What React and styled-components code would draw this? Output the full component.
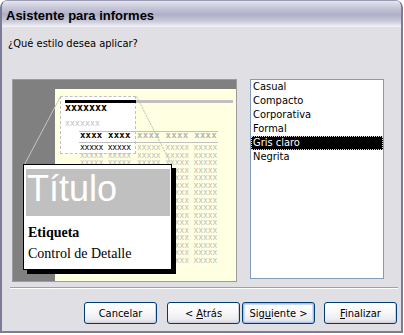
import React from "react";
import styled, { createGlobalStyle } from "styled-components";

const GlobalStyle = createGlobalStyle`
  html, body { margin: 0; padding: 0; background: #ffffff; }
  body {
    font-family: "DejaVu Sans Condensed", "DejaVu Sans", sans-serif;
    font-size: 11px;
    color: #000;
  }
`;

const Window = styled.div`
  width: 403px;
  height: 333px;
  box-sizing: border-box;
  border: 2px solid #7c7c98;
  border-top: none;
  border-radius: 8px 8px 0 0;
  background: #e0dfe3;
  display: flex;
  flex-direction: column;
  overflow: hidden;
`;

const TitleBar = styled.div`
  height: 27px;
  box-sizing: border-box;
  padding: 7px 0 0 4px;
  border-top: 1px solid #9a9ab2;
  background: linear-gradient(
    to bottom,
    #e6e6ef 0%,
    #cbcbdc 22%,
    #afafc8 52%,
    #c9c9da 78%,
    #f4f4f8 100%
  );
  font: bold 13px/15px "Liberation Sans", Arial, sans-serif;
  color: #000;
`;

const Body = styled.div`
  flex: 1;
  display: flex;
  flex-direction: column;
`;

const Question = styled.div`
  margin: 10px 0 0 6px;
  line-height: 13px;
`;

const MainRow = styled.div`
  display: flex;
  align-items: flex-start;
  gap: 13px;
  margin: 29px 0 0 10px;
`;

const Preview = styled.div`
  position: relative;
  box-sizing: border-box;
  width: 225px;
  height: 203px;
  border: 1px solid #9c9c9c;
  background: #808080;
  padding: 9px 0 0 42px;
  display: flex;
`;

const Page = styled.div`
  position: relative;
  flex: 1;
  background: #ffffe1;
`;

const Highlight = styled.div`
  position: absolute;
  left: 5px;
  top: 7px;
  width: 76px;
  height: 58px;
  box-sizing: border-box;
  border: 1px dashed #c0c0c0;
  background: #ffffff;
`;

const PageContent = styled.div`
  position: relative;
  padding-top: 11px;
`;

const HeaderBar = styled.div`
  display: flex;
  margin-left: 10px;
  height: 3px;
`;

const BarPart = styled.div`
  width: ${(p) => p.$w}px;
  background: ${(p) => p.$color};
`;

const Marks = styled.div`
  font-family: "DejaVu Sans Mono", monospace;
  font-size: ${(p) => p.$size}px;
  line-height: ${(p) => p.$lh}px;
  font-weight: ${(p) => (p.$bold ? "bold" : "normal")};
  letter-spacing: ${(p) => p.$ls || 0}px;
  color: ${(p) => p.$color};
  margin: ${(p) => p.$margin || "0"};
  white-space: pre;
`;

const Table = styled.div`
  margin: 3px 0 0 24px;
  width: 139px;
  border-top: 1px solid #c0c0c0;
`;

const HeadRow = styled.div`
  display: flex;
  height: 10px;
  border-bottom: 1px solid #c0c0c0;
`;

const Rows = styled.div`
  padding-top: 1px;
`;

const Row = styled.div`
  display: flex;
  height: 7.5px;
`;

const Cell = styled.div`
  width: ${(p) => p.$w}px;
  padding-left: ${(p) => p.$pl || 0}px;
  box-sizing: border-box;
`;

const Lines = styled.svg`
  position: absolute;
  left: 0;
  top: 0;
  z-index: 1;
  pointer-events: none;
`;

const Popup = styled.div`
  position: absolute;
  left: 10px;
  top: 84px;
  width: 149px;
  height: 106px;
  box-sizing: border-box;
  border: 1px solid #000;
  background: #fff;
  box-shadow: 4px 4px 0 #000;
  z-index: 2;
`;

const TitleBlock = styled.div`
  margin: 4px 1px 0 2px;
  height: 47px;
  box-sizing: border-box;
  padding: 2px 0 0 1px;
  background: #c0c0c0;
  color: #fff;
  font: 36px/36px "Liberation Sans", Arial, sans-serif;
`;

const Labels = styled.div`
  margin-top: 6px;
  padding-left: 4px;
  font-family: "Liberation Serif", "Times New Roman", serif;
  font-size: 14px;
  line-height: 21px;
`;

const Label = styled.div`
  font-weight: ${(p) => (p.$bold ? "bold" : "normal")};
`;

const ListBox = styled.div`
  box-sizing: border-box;
  width: 134px;
  height: 200px;
  border: 1px solid #7f9db9;
  background: #fff;
`;

const ListItem = styled.div`
  height: 14px;
  line-height: 14px;
  padding-left: 2px;
  background: ${(p) => (p.$selected ? "#000" : "transparent")};
  color: ${(p) => (p.$selected ? "#fff" : "#000")};
  outline: ${(p) => (p.$selected ? "1px dotted #d8d8d8" : "none")};
  outline-offset: -1px;
`;

const Separator = styled.div`
  margin: 5px 3px 0 8px;
  border-top: 1px solid #a0a0a4;
  border-bottom: 1px solid #ffffff;
`;

const ButtonRow = styled.div`
  display: flex;
  justify-content: flex-end;
  margin-top: 13px;
  padding-right: 4px;
`;

const Button = styled.button`
  width: 73px;
  height: 22px;
  box-sizing: border-box;
  margin: 0 0 0 ${(p) => p.$gap || 0}px;
  padding: 0;
  border: 1px solid #003c74;
  border-radius: 3px;
  background: linear-gradient(
    to bottom,
    #ffffff 0%,
    #f8f8fa 45%,
    #ededf1 80%,
    #d6d6de 100%
  );
  box-shadow: ${(p) =>
    p.$default
      ? "inset 0 0 0 1px #a6c0ee, inset 0 0 0 2px #cfdcf5"
      : "inset -1px -1px 0 #d2d2da"};
  font-family: "DejaVu Sans Condensed", "DejaVu Sans", sans-serif;
  font-size: 11px;
  line-height: 13px;
  color: #000;
  u { text-decoration: underline; }
`;

const styles = ["Casual", "Compacto", "Corporativa", "Formal", "Gris claro", "Negrita"];
const rowCount = 16;
const visibleLeftRows = 3;

export default function App() {
  return (
    <>
      <GlobalStyle />
      <Window>
        <TitleBar>Asistente para informes</TitleBar>
        <Body>
          <Question>¿Qué estilo desea aplicar?</Question>
          <MainRow>
            <Preview>
              <Page>
                <Highlight />
                <PageContent>
                  <HeaderBar>
                    <BarPart $w={71} $color="#000" />
                    <BarPart $w={97} $color="#c0c0c0" />
                  </HeaderBar>
                  <Marks $size={10} $lh={10} $bold $color="#000" $margin="0 0 0 10px">
                    xxxxxxx
                  </Marks>
                  <Marks $size={8} $lh={8} $ls={0.2} $color="#c0c0c0" $margin="7px 0 0 10px">
                    xxxxxxx
                  </Marks>
                  <Table>
                    <HeadRow>
                      <Cell $w={58} $pl={1}>
                        <Marks $size={9} $lh={6} $bold $ls={0.2} $color="#000">
                          xxxx xxxx
                        </Marks>
                      </Cell>
                      <Cell $w={81}>
                        <Marks $size={9} $lh={6} $bold $ls={0.3} $color="#b4b4b4">
                          xxxx xxxx xxxx
                        </Marks>
                      </Cell>
                    </HeadRow>
                    <Rows>
                      {Array.from({ length: rowCount }).map((_, i) => (
                        <Row key={i}>
                          <Cell $w={58} $pl={1}>
                            {i < visibleLeftRows && (
                              <Marks
                                $size={8}
                                $lh={7.5}
                                $ls={-0.2}
                                $color={i === 0 ? "#000" : "#c0c0c0"}
                              >
                                xxxxx xxxxx
                              </Marks>
                            )}
                          </Cell>
                          <Cell $w={81}>
                            <Marks $size={8} $lh={7.5} $ls={-0.1} $color="#c0c0c0">
                              xxxxx xxxxx xxxxx
                            </Marks>
                          </Cell>
                        </Row>
                      ))}
                    </Rows>
                  </Table>
                </PageContent>
              </Page>
              <Lines width="223" height="201" viewBox="0 0 223 201">
                <line x1="47.5" y1="16.5" x2="11.5" y2="84.5" stroke="#c4c4c4" strokeWidth="1" />
                <line
                  x1="123.5"
                  y1="16.5"
                  x2="158.5"
                  y2="84.5"
                  stroke="#b8b8b8"
                  strokeWidth="1"
                  strokeDasharray="2 1"
                />
              </Lines>
              <Popup>
                <TitleBlock>Título</TitleBlock>
                <Labels>
                  <Label $bold>Etiqueta</Label>
                  <Label>Control de Detalle</Label>
                </Labels>
              </Popup>
            </Preview>
            <ListBox>
              {styles.map((s) => (
                <ListItem key={s} $selected={s === "Gris claro"}>
                  {s}
                </ListItem>
              ))}
            </ListBox>
          </MainRow>
          <Separator />
          <ButtonRow>
            <Button>Cancelar</Button>
            <Button $gap={10}>
              &lt; <u>A</u>trás
            </Button>
            <Button $gap={2} $default>
              Sig<u>u</u>iente &gt;
            </Button>
            <Button $gap={9}>
              <u>F</u>inalizar
            </Button>
          </ButtonRow>
        </Body>
      </Window>
    </>
  );
}
